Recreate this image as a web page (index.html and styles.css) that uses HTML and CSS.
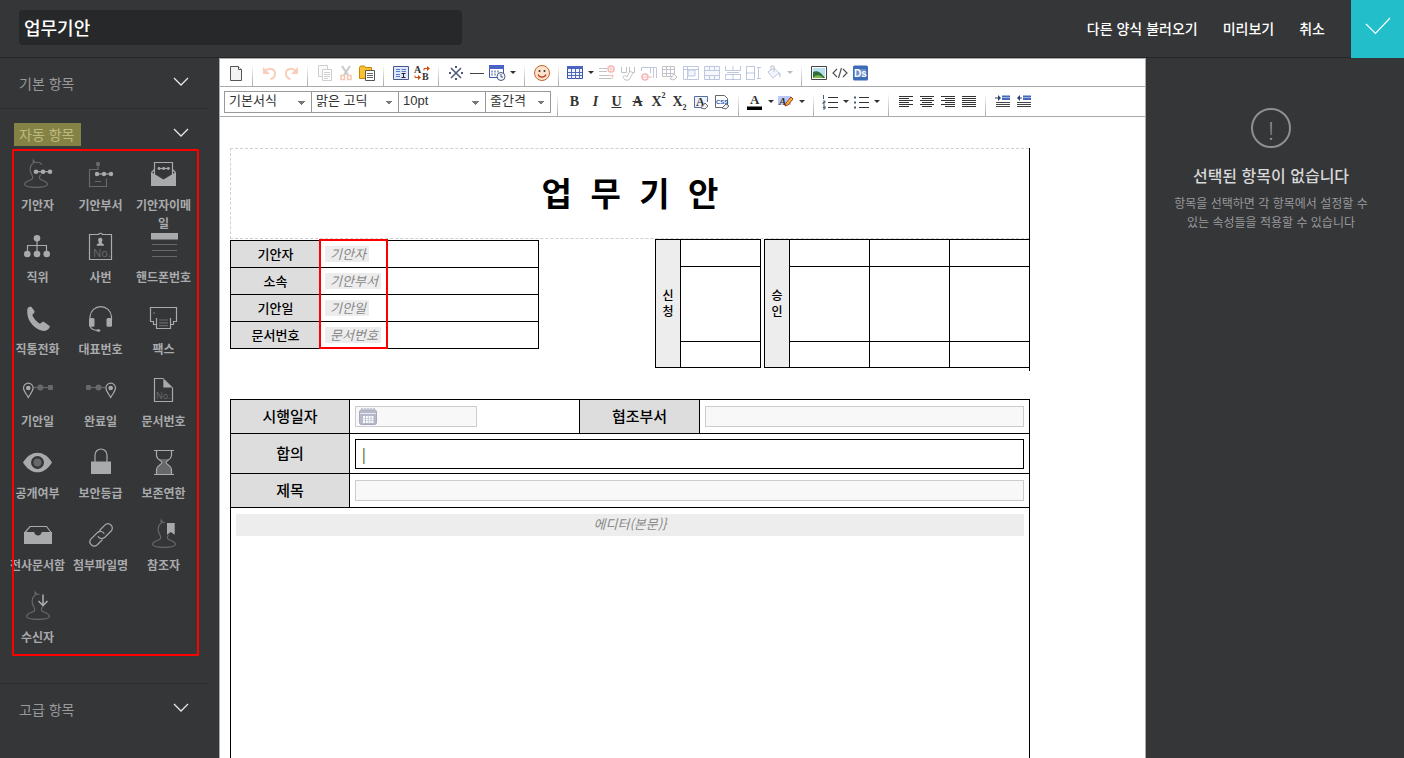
FILE: index.html
```html
<!DOCTYPE html>
<html lang="ko">
<head>
<meta charset="utf-8">
<meta name="viewport" content="width=device-width, initial-scale=1">
<title>업무기안</title>
<link rel="stylesheet" href="styles.css">
</head>
<body>
<svg class="defs" aria-hidden="true">
  <symbol id="person" viewBox="0 0 34 34"><path class="ln dim" d="M21 6.500C19 4.300 16.500 3.900 14 4.500L12.200 2.300V5.200C9.300 6.500 8.600 11 9.700 14.200C10.500 16.800 12.600 18.600 11.600 20.600C10 22.600 3.600 22.900 3.600 26.300C3.600 28.600 9 29.400 15 29.400S26.400 28.600 26.400 26.300C26.400 23 20.500 22.600 18.700 20.600C18 19.200 18.600 18 19.600 16.700"/></symbol>
  <symbol id="chev" viewBox="0 0 16 10"><path d="M1 1l7 7 7-7" fill="none" stroke="#e8e8e8" stroke-width="1.300"/></symbol>
  <symbol id="lines" viewBox="0 0 16 16"><path d="M6 3.500h10M6 8.500h10M6 13.500h10" stroke="#333" fill="none"/></symbol>
</svg>
<header class="top">
  <input class="top-title" type="text" value="업무기안" aria-label="양식 제목">
  <nav class="top-nav">
    <button type="button">다른 양식 불러오기</button>
    <button type="button">미리보기</button>
    <button type="button">취소</button>
  </nav>
  <button class="confirm" type="button" aria-label="확인"><svg width="26" height="18" viewBox="0 0 26 18"><path d="M1 7l9.500 9.500L25 1" fill="none" stroke="#fff" stroke-width="1.200"/></svg></button>
</header>
<div class="work">
  <aside class="side">
    <section class="sec"><button class="sec-head" type="button"><span>기본 항목</span><svg class="chev"><use href="#chev"/></svg></button></section>
    <section class="sec">
      <button class="sec-head" type="button"><mark>자동 항목</mark><svg class="chev"><use href="#chev"/></svg></button>
      <div class="items">
        <button type="button"><svg viewBox="0 0 34 34"><use href="#person" width="34" height="34"/><path class="ln" d="M15 13.700h14"/><g class="fl"><circle cx="15" cy="13.700" r="2.300"/><circle cx="22" cy="13.700" r="2.300"/><circle cx="29" cy="13.700" r="2.300"/></g></svg><span>기안자</span></button>
        <button type="button"><svg viewBox="0 0 34 34"><path class="ln dim" d="M14 6v6M14 11.500H5.500v17h17V20.500M11 23.500h6"/><circle class="fd" cx="14" cy="6" r="2.200"/><path class="ln" d="M13 16h14"/><g class="fl"><circle cx="13" cy="16" r="2.200"/><circle cx="20" cy="16" r="2.200"/><circle cx="27" cy="16" r="2.200"/></g></svg><span>기안부서</span></button>
        <button type="button"><svg viewBox="0 0 34 34"><path class="ln" d="M7.500 17V4.500h18V17M7.500 11.500l-3 3M25.500 11.500l3 3"/><path class="fl" d="M4 14l12.500 7.500L29 14v14H4z"/><path class="ln" d="M12 10.500h9.500"/><g class="fl"><circle cx="12" cy="10.500" r="1.400"/><circle cx="16.700" cy="10.500" r="1.400"/><circle cx="21.400" cy="10.500" r="1.400"/></g></svg><span>기안자이메일</span></button>
        <button type="button"><svg viewBox="0 0 34 34"><path class="ln" d="M16 8v16M6.500 24v-8.500h19V24"/><g class="fl"><circle cx="16" cy="8.300" r="3.300"/><circle cx="6.300" cy="24" r="3.300"/><circle cx="16" cy="24" r="3.300"/><circle cx="25.700" cy="24" r="3.300"/></g></svg><span>직위</span></button>
        <button type="button"><svg viewBox="0 0 34 34"><path class="ln" d="M14.500 4.500h-9v25h22v-25h-9c0-1.500-4-1.500-4 0z"/><path class="fl" d="M16.300 7.800c2 0 2.800 2.200 1.500 4.200v1.200l2 1v1.600h-7v-1.600l2-1V12c-1.300-2-.5-4.200 1.500-4.200z"/><text class="no" x="9" y="26.500" font-size="11">No.</text></svg><span>사번</span></button>
        <button type="button"><svg viewBox="0 0 34 34"><path class="fl" d="M4 3h27v6.500H4z"/><path class="ln dim" d="M5 14.500h25M5 20.500h25M5 26.500h25"/></svg><span>핸드폰번호</span></button>
        <button type="button"><svg viewBox="0 0 34 34"><path class="fl" d="M6.500 6.500C7.500 4.500 9.500 4.400 10.500 5l2.800 3.800c.7 1.400 0 2.200-1 3-1 .8-1 1.500-.5 2.500 1.600 3 3.700 5.200 6.200 6.900 1 .6 1.700.4 2.400-.4.900-1 1.900-1.300 3-.6l4.600 3.300c.9.700 1 1.600.3 2.600-1.500 2.200-4 3.300-6.900 2.700C13 26.900 4.500 17.500 6.500 6.500z"/></svg><span>직통전화</span></button>
        <button type="button"><svg viewBox="0 0 34 34"><path class="ln" d="M6 18v-3.500a10.800 11 0 0 1 21.500 0V18M6 23.500c.5 3.500 3.500 4.800 8 5"/><rect class="fl" x="5" y="16" width="5.500" height="8.700" rx="1.500"/><rect class="fl" x="22.500" y="16" width="5.500" height="8.700" rx="1.500"/><ellipse class="fl" cx="14.300" cy="28.500" rx="2" ry="1.300"/></svg><span>대표번호</span></button>
        <button type="button"><svg viewBox="0 0 34 34"><path class="ln" d="M9.500 22.500h-3v-3h-3v-14h26v14h-3v3h-3"/><path class="ln" d="M9.500 16v10.500h14V16"/><path class="ln dim" d="M12 18h9M12 20.800h9M12 23.600h9"/><circle class="fd" cx="7" cy="11" r="1"/></svg><span>팩스</span></button>
        <button type="button"><svg viewBox="0 0 34 34"><path class="ln dim" d="M13 13.500h18"/><circle class="fd" cx="19.300" cy="13.500" r="3"/><rect class="fd" x="27" y="11" width="5" height="5" rx="1"/><path class="ln" d="M7.300 23.500C5 19.500 2.500 17 2.500 14a4.800 4.800 0 0 1 9.600 0c0 3-2.500 5.500-4.800 9.500z"/><circle class="fl" cx="7.300" cy="14" r="2.300"/></svg><span>기안일</span></button>
        <button type="button"><svg viewBox="0 0 34 34"><path class="ln dim" d="M3 13.500h18"/><circle class="fd" cx="14.500" cy="13.500" r="3"/><rect class="fd" x="2" y="11" width="5" height="5" rx="1"/><path class="ln" d="M26.700 23.500c-2.300-4-4.800-6.500-4.800-9.500a4.800 4.800 0 0 1 9.600 0c0 3-2.500 5.500-4.800 9.500z"/><circle class="fl" cx="26.700" cy="14" r="2.300"/></svg><span>완료일</span></button>
        <button type="button"><svg viewBox="0 0 34 34"><path class="ln" d="M16.500 4.500h-9v23h18v-14"/><path class="fl" d="M16.300 4.300l9.500 9.200h-9.500z"/><text class="no" x="9" y="25" font-size="9">No.</text></svg><span>문서번호</span></button>
        <button type="button"><svg viewBox="0 0 34 34"><path class="fl" d="M2 16.500C6 10 11 6.700 16.500 6.700S27 10 31 16.500C27 23 22 26.300 16.500 26.300S6 23 2 16.500z"/><circle class="bg" cx="16.500" cy="16.500" r="6.500"/><circle class="fd" cx="16.500" cy="16.500" r="4"/></svg><span>공개여부</span></button>
        <button type="button"><svg viewBox="0 0 34 34"><path class="ln" d="M11 16V9a6 6 0 0 1 12 0v7"/><path class="fl" d="M7 15.500h20V28H7z"/></svg><span>보안등급</span></button>
        <button type="button"><svg viewBox="0 0 34 34"><path class="fd" d="M12 13h10l-3.500 4 5.500 6v5H10v-5l5.500-6z"/><path class="ln" d="M7 4.500h20M7 28.500h20M9.500 5v4.500c0 4 5.500 5 5.500 7s-5.500 3-5.500 7.500v4M24.500 5v4.500c0 4-5.500 5-5.500 7s5.500 3 5.500 7.500v4"/></svg><span>보존연한</span></button>
        <button type="button"><svg viewBox="0 0 34 34"><path class="ln" d="M3.500 15L9 8.500h16.500L30.500 15"/><path class="fl" d="M3 14h10.200c.4 2 1.900 3.500 3.800 3.500s3.400-1.500 3.800-3.500H31v12H3z"/></svg><span>전사문서함</span></button>
        <button type="button"><svg viewBox="0 0 34 34"><path class="ln" d="M15.500 12.500l5.300-5.300c4-3.900 10.200 1.600 6.300 5.800l-6.200 6.200c-2.300 2.200-5.900 1.400-7-.9M18.500 21.500l-5.200 5.200c-4 3.700-10-1.600-6.200-5.800l6.200-6.200c2.300-2.200 6-1.400 7 1.100"/></svg><span>첨부파일명</span></button>
        <button type="button"><svg viewBox="0 0 34 34"><use href="#person" x="2" width="34" height="34"/><path class="bg" d="M18 3h12v14H18z"/><path class="fl" d="M20 5h7.700v11.700L23.800 14 20 16.700z"/></svg><span>참조자</span></button>
        <button type="button"><svg viewBox="0 0 34 34"><use href="#person" x="2" width="34" height="34"/><path class="bg" d="M18.500 3h8v12h-8z"/><path class="ln bold" d="M22 4.500v11M17.500 11l4.500 4.500 4.500-4.500"/></svg><span>수신자</span></button>
        <i class="mark-box items-box"></i>
      </div>
    </section>
    <section class="sec"><button class="sec-head" type="button"><span>고급 항목</span><svg class="chev"><use href="#chev"/></svg></button></section>
  </aside>
  <main class="editor">
    <div class="bar bar-main">
      <div class="grp">
        <button type="button" aria-label="새 문서"><svg viewBox="0 0 16 16"><path d="M2.500 1.500h8l3 3v11h-11z" fill="#f3f3f3" stroke="#555"/><path d="M10.500 1.500v3h3" fill="#fff" stroke="#555"/></svg></button>
      </div>
      <div class="grp">
        <button type="button" aria-label="실행 취소"><svg class="off" viewBox="0 0 16 16"><path d="M3 6.500C6 2.500 13 3 13 8.500c0 3-2 5-4.500 5.500" fill="none" stroke="#f0763a" stroke-width="2"/><path d="M1 2v7h7z" fill="#f0763a"/></svg></button>
        <button type="button" aria-label="다시 실행"><svg class="off" viewBox="0 0 16 16"><path d="M13 6.500C10 2.500 3 3 3 8.500c0 3 2 5 4.500 5.500" fill="none" stroke="#f0763a" stroke-width="2"/><path d="M15 2v7H8z" fill="#f0763a"/></svg></button>
      </div>
      <div class="grp">
        <button type="button" aria-label="복사"><svg class="off" viewBox="0 0 16 16"><path d="M1.500.5h9v11h-9z" fill="#eee" stroke="#777"/><path d="M5.500 4.500h9v11h-9z" fill="#fff" stroke="#777"/><path d="M7 7.500h6M7 9.500h6M7 11.500h6M7 13.500h4" stroke="#777"/></svg></button>
        <button type="button" aria-label="잘라내기"><svg class="off" viewBox="0 0 16 16"><path d="M4 1l6 9M12 1L6 10" stroke="#666" stroke-width="2" fill="none"/><path d="M3 10.500h3.500v4H3zM9.500 10.500H13v4H9.500z" fill="none" stroke="#e2622c" stroke-width="1.500"/></svg></button>
        <button type="button" aria-label="붙여넣기"><svg viewBox="0 0 16 16"><path d="M.5 2.500l1-1.500h4l1 1.500h6v11H.5z" fill="#fbc02d" stroke="#c98500"/><path d="M6.500 5.500h9v10h-9z" fill="#fff" stroke="#555"/><path d="M8 8.500h6M8 10.500h6M8 12.500h6" stroke="#666"/></svg></button>
      </div>
      <div class="grp">
        <button type="button" aria-label="서식"><svg viewBox="0 0 16 16"><path d="M.5 1.500h15v13H.5z" fill="#dfe8fb" stroke="#46598c"/><path d="M3 4.500h4M3 6.500h4M8.500 4.500H13M8.500 6.500H13M3 9.500h4M3 11.500h4" stroke="#5878cc"/><path d="M8.500 8.500h4M10.500 8.500v4.500M8.500 12.500h4" stroke="#222"/></svg></button>
        <button type="button" aria-label="찾기 바꾸기"><svg viewBox="0 0 16 16"><text x="0" y="8" class="ser" font-size="10">A</text><text x="8" y="15" class="ser" font-size="10">B</text><path d="M10 5.500V3.500h4M1 10.500v2h4" fill="none" stroke="#d9480f"/><path d="M13 1l3 2.500L13 6zM4 10l3 2.500L4 15z" fill="#d9480f"/></svg></button>
      </div>
      <div class="grp">
        <button type="button" aria-label="특수문자"><svg viewBox="0 0 16 16"><path d="M3 3l10 10M13 3L3 13" stroke="#4b5878" stroke-width="1.500"/><g fill="#4b5878"><path d="M7 1h2v2H7zM7 13h2v2H7zM1 7h2v2H1zM13 7h2v2h-2z"/></g></svg></button>
        <button type="button" aria-label="가로선"><svg viewBox="0 0 16 16"><path d="M1 8.500h14" stroke="#444"/></svg></button>
        <button type="button" class="drop" aria-label="날짜"><svg viewBox="0 0 16 16"><path d="M.5.500h14v12H.5z" fill="#fff" stroke="#3b55b0"/><path d="M0 0h15v4H0z" fill="#4a63c4"/><path d="M2 6.500h9M2 9.500h6" stroke="#98a4cc" stroke-width="2" stroke-dasharray="2 1"/><circle cx="12" cy="11.500" r="4" fill="#f3f6ff" stroke="#4b5878"/><path d="M12 9v3h2" fill="none" stroke="#4b5878"/></svg></button>
      </div>
      <div class="grp">
        <button type="button" aria-label="이모티콘"><svg viewBox="0 0 16 16"><circle cx="8" cy="8" r="7.500" fill="#fde3cb" stroke="#c4632d"/><circle cx="5.500" cy="6" r="1" fill="#333"/><circle cx="10.500" cy="6" r="1" fill="#333"/><path d="M4 9.500c1.500 3.500 6.500 3.500 8 0" fill="none" stroke="#c02f1d" stroke-width="1.200"/></svg></button>
      </div>
      <div class="grp">
        <button type="button" class="drop" aria-label="표"><svg viewBox="0 0 16 16"><path d="M.5 1.500h15v12H.5z" fill="#f2f5ff" stroke="#3b55a8"/><path d="M0 1h16v3H0z" fill="#4a63c4"/><path d="M4.500 2v12M8.500 2v12M12.500 2v12M1 7.500h14M1 10.500h14" stroke="#5068b8"/></svg></button>
        <button type="button" aria-label="행 추가"><svg class="off" viewBox="0 0 16 16"><path d="M0 3.500h8M0 6.500h8M0 10.500h10M0 13.500h12" stroke="#555"/><circle cx="12" cy="4" r="3" fill="none" stroke="#e0302c" stroke-width="1.500"/><path d="M12 2.500v3M10.500 4h3M10 11l4-1-1 4" stroke="#e0302c" fill="none"/></svg></button>
        <button type="button" aria-label="열 추가"><svg class="off" viewBox="0 0 16 16"><path d="M1.500 2v5.500h5V2M9.500 2v5.500h5V2" fill="none" stroke="#555"/><path d="M5 15c-4-4 0-6 2-3l3-6 3 2-4 7z" fill="#fff" stroke="#555"/></svg></button>
        <button type="button" aria-label="행 삭제"><svg class="off" viewBox="0 0 16 16"><path d="M.5 6V2.500h9V8M9.500 2.500h6V13M12.500 3v10" fill="none" stroke="#4b60aa"/><circle cx="4" cy="12" r="3" fill="none" stroke="#e0302c" stroke-width="1.500"/><path d="M2 12h4M8 12h3" stroke="#e0302c"/></svg></button>
        <button type="button" aria-label="표 삭제"><svg class="off" viewBox="0 0 16 16"><path d="M.5 1.500h12v10H.5zM4.500 2v9M8.500 2v9M1 4.500h11M1 8.500h11" fill="none" stroke="#556"/><path d="M8 14l4-5 3 3-3 3z" fill="#eee" stroke="#556"/></svg></button>
        <button type="button" aria-label="표 속성"><svg class="off" viewBox="0 0 16 16"><path d="M.5 1.500h15v13H.5zM.5 4.500h15M4.500 1.500v13" fill="none" stroke="#4b60aa"/><path d="M5 5h7v6H5z" fill="#dfe5fa" stroke="#4b60aa"/></svg></button>
        <button type="button" aria-label="셀 병합"><svg class="off" viewBox="0 0 16 16"><path d="M.5 1.500h15v13H.5zM5.500 1.500v4M10.500 1.500v4M.5 5.500h15v5H.5M5.500 10.500v4M10.500 10.500v4" fill="#e8ecfb" stroke="#4b60aa"/></svg></button>
        <button type="button" aria-label="행 분할"><svg class="off" viewBox="0 0 16 16"><path d="M.5 1v4.500h15V1M8 1v4M.5 9.500h15v5H.5zM8 9.500v5M2 7.500h12" fill="none" stroke="#4b60aa"/></svg></button>
        <button type="button" aria-label="열 분할"><svg class="off" viewBox="0 0 16 16"><path d="M.5 1.500h8v13h-8zM.5 8h8M12.500 3v10M11 2.500h4M11 13.500h4" fill="none" stroke="#4b60aa"/></svg></button>
        <button type="button" class="drop drop-off" aria-label="셀 배경색"><svg class="off" viewBox="0 0 16 16"><path d="M2 7l6-4 5 5-6 5z" fill="#dbe3fa" stroke="#4b60aa"/><path d="M8 7V1H5v4" fill="none" stroke="#556"/><path d="M12 7c3 0 3 4 2 6-1-2-1-4-2-6z" fill="#4b60aa"/></svg></button>
      </div>
      <div class="grp">
        <button type="button" aria-label="이미지"><svg viewBox="0 0 16 16"><path d="M.5 1.500h15v13H.5z" fill="#fff" stroke="#444"/><path d="M2 3h12v10H2z" fill="#b6e0ee"/><path d="M2 7c5-2 8 1 12 6H2z" fill="#2f6f3a"/><path d="M2 13c3-4 8-3 10 0z" fill="#86b84a"/></svg></button>
        <button type="button" aria-label="소스"><svg viewBox="0 0 16 16"><path d="M5 4L1 8l4 4M11 4l4 4-4 4M9.500 3l-3 10" fill="none" stroke="#555" stroke-width="1.200"/></svg></button>
        <button type="button" aria-label="Ds"><svg viewBox="0 0 16 16"><rect y="0.500" width="15" height="15" rx="1.500" fill="#3f6cb8"/><path d="M2 4h11v8H2z" fill="#fff" opacity=".25"/><text x="1" y="12" font-family="Liberation Sans, sans-serif" font-size="10" font-weight="bold" fill="#fff">Ds</text></svg></button>
      </div>
    </div>
    <div class="bar bar-format">
      <div class="selects">
        <select aria-label="서식"><option>기본서식</option></select>
        <select aria-label="글꼴"><option>맑은 고딕</option></select>
        <select aria-label="글자 크기"><option>10pt</option></select>
        <select class="narrow" aria-label="줄간격"><option>줄간격</option></select>
      </div>
      <div class="grp">
        <button type="button" class="t"><b>B</b></button>
        <button type="button" class="t"><em>I</em></button>
        <button type="button" class="t"><u>U</u></button>
        <button type="button" class="t"><s>A</s></button>
        <button type="button" class="t">X<sup>2</sup></button>
        <button type="button" class="t">X<sub>2</sub></button>
        <button type="button" aria-label="서식 지우기"><svg viewBox="0 0 16 16"><path d="M14.500 8V2.500H1.500v11H8" fill="#eef2fd" stroke="#5a6ca0"/><text x="3" y="12" class="ser" font-size="12">A</text><path d="M8 14l4-5 3 3-3 3z" fill="#f4f4f4" stroke="#667"/></svg></button>
        <button type="button" aria-label="CSS 지우기"><svg viewBox="0 0 16 16"><path d="M1.500 1.500h9l3 3v9h-12z" fill="#fff" stroke="#666"/><text x="2" y="10" font-family="Liberation Sans, sans-serif" font-size="6" font-weight="bold" fill="#2556b8">CSS</text><path d="M8 14l4-4 3 2-3 3z" fill="#f4f4f4" stroke="#667"/></svg></button>
      </div>
      <div class="grp">
        <button type="button" class="drop" aria-label="글자색"><svg viewBox="0 0 16 16"><text x="3" y="10" class="ser" font-size="13">A</text><path d="M0 12.500h15v3.500H0z"/></svg></button>
        <button type="button" class="drop" aria-label="배경색"><svg viewBox="0 0 16 16"><path d="M0 2h13v9H0z" fill="#b9c8f7"/><text x="1" y="11" class="ser" font-size="11" font-style="italic">A</text><path d="M7 12l1-3 5-6 2 2-5 6z" fill="#f9b234" stroke="#a33c14"/></svg></button>
      </div>
      <div class="grp">
        <button type="button" class="drop" aria-label="번호 목록"><svg viewBox="0 0 16 16"><use href="#lines" width="16" height="16"/><path d="M1.500 1v4M1 7h2v1.500H1V10h2M1 12h2v3H1M1 13.500h2" fill="none" stroke="#4b5878"/></svg></button>
        <button type="button" class="drop" aria-label="글머리 목록"><svg viewBox="0 0 16 16"><use href="#lines" width="16" height="16"/><path d="M1 2.500h2v2H1zM1 7.500h2v2H1zM1 12.500h2v2H1z" fill="#4b5878"/></svg></button>
      </div>
      <div class="grp">
        <button type="button" aria-label="왼쪽 정렬"><svg viewBox="0 0 16 16"><path d="M1 2.500h14M1 4.500h10M1 6.500h14M1 8.500h10M1 10.500h14M1 12.500h10" stroke="#333"/></svg></button>
        <button type="button" aria-label="가운데 정렬"><svg viewBox="0 0 16 16"><path d="M1 2.500h14M3 4.500h10M1 6.500h14M3 8.500h10M1 10.500h14M3 12.500h10" stroke="#333"/></svg></button>
        <button type="button" aria-label="오른쪽 정렬"><svg viewBox="0 0 16 16"><path d="M1 2.500h14M5 4.500h10M1 6.500h14M5 8.500h10M1 10.500h14M5 12.500h10" stroke="#333"/></svg></button>
        <button type="button" aria-label="양쪽 정렬"><svg viewBox="0 0 16 16"><path d="M1 2.500h14M1 4.500h14M1 6.500h14M1 8.500h14M1 10.500h14M1 12.500h14" stroke="#333"/></svg></button>
      </div>
      <div class="grp">
        <button type="button" aria-label="들여쓰기"><svg viewBox="0 0 16 16"><path d="M7 2.500h8M7 5h8" stroke="#4468bb" stroke-width="2"/><path d="M1 8.500h14M1 10.500h14M1 12.500h14" stroke="#444"/><path d="M0 4h4" stroke="#2d3f6e"/><path d="M3 1l3 3-3 3z" fill="#2d3f6e"/></svg></button>
        <button type="button" aria-label="내어쓰기"><svg viewBox="0 0 16 16"><path d="M7 2.500h8M7 5h8" stroke="#4468bb" stroke-width="2"/><path d="M1 8.500h14M1 10.500h14M1 12.500h14" stroke="#444"/><path d="M2 4h4" stroke="#2d3f6e"/><path d="M4 1L1 4l3 3z" fill="#2d3f6e"/></svg></button>
      </div>
    </div>
    <div class="canvas">
      <article class="paper">
        <div class="head">
          <h1>업&nbsp; 무&nbsp; 기&nbsp; 안</h1>
          <div class="meta">
            <div class="info-wrap">
              <table class="grid info">
                <tr><th scope="row">기안자</th><td><span class="chip">기안자</span></td></tr>
                <tr><th scope="row">소속</th><td><span class="chip">기안부서</span></td></tr>
                <tr><th scope="row">기안일</th><td><span class="chip">기안일</span></td></tr>
                <tr><th scope="row">문서번호</th><td><span class="chip">문서번호</span></td></tr>
              </table>
              <i class="mark-box info-box"></i>
            </div>
            <div class="signs">
              <table class="grid sign"><tr><th rowspan="3">신<br>청</th><td></td></tr><tr class="stamp"><td></td></tr><tr class="last"><td></td></tr></table>
              <table class="grid sign"><tr><th rowspan="3">승<br>인</th><td></td><td></td><td></td></tr><tr class="stamp"><td></td><td></td><td></td></tr><tr class="last"><td></td><td></td><td></td></tr></table>
            </div>
          </div>
        </div>
        <table class="grid form">
          <colgroup><col class="c-first"><col class="c-date"><col class="c-label"><col></colgroup>
          <tr><th scope="row"><label for="f-date">시행일자</label></th><td><div class="field date"><svg width="18" height="17" viewBox="0 0 18 17"><rect x=".5" y="2" width="17" height="14.500" rx="2" fill="#b5b9c9" stroke="#a3a8ba"/><path d="M1 5.500h16" stroke="#e6e8f0"/><path d="M3 0v3M6 0v3M9 0v3M12 0v3M15 0v3" stroke="#b5b9c9" stroke-width="1.500"/><path d="M4 9h10.500M4 11.500h10.500M4 14h10.500" stroke="#fff" stroke-width="2" stroke-dasharray="2 .8"/></svg><input id="f-date" type="text"></div></td><th scope="row"><label for="f-dept">협조부서</label></th><td><input id="f-dept" class="field" type="text"></td></tr>
          <tr class="tall"><th scope="row"><label for="f-agree">합의</label></th><td colspan="3"><input id="f-agree" class="agree" type="text"></td></tr>
          <tr><th scope="row"><label for="f-title">제목</label></th><td colspan="3"><input id="f-title" class="field" type="text"></td></tr>
          <tr class="body"><td colspan="4"><div class="body-chip">에디터(본문)}</div></td></tr>
        </table>
      </article>
    </div>
  </main>
  <aside class="props">
    <div class="bang">!</div>
    <h2>선택된 항목이 없습니다</h2>
    <p>항목을 선택하면 각 항목에서 설정할 수<br>있는 속성들을 적용할 수 있습니다</p>
  </aside>
</div>
</body>
</html>
```
FILE: styles.css
```css
* { box-sizing: border-box; }
body {
  margin: 0;
  height: 100vh;
  display: flex;
  flex-direction: column;
  overflow: hidden;
  background: #353638;
  font-family: "Noto Sans CJK KR", sans-serif;
  font-size: 13px;
}
button, input, select { font: inherit; color: inherit; margin: 0; padding: 0; }
button { background: none; border: 0; }
.defs { position: absolute; width: 0; height: 0; }

/* Header */
.top {
  flex: none;
  display: flex;
  align-items: stretch;
  height: 58px;
  padding-left: 19px;
  color: #fff;
  border-bottom: 1px solid #252627;
}
.top-title {
  width: 443px;
  height: 35px;
  margin-top: 10px;
  padding: 0 5px 2px;
  border: 0;
  border-radius: 4px;
  background: #272829;
  font-size: 18px;
  font-weight: 500;
}
.top-nav {
  margin-left: auto;
  padding: 0 26px 2px 0;
  display: flex;
  align-items: center;
  gap: 25px;
  font-size: 14px;
  font-weight: 500;
}
.confirm {
  width: 53px;
  margin-bottom: -1px;
  padding-bottom: 6px;
  background: #22bec9;
  display: flex;
  align-items: center;
  justify-content: center;
}
.work { flex: 1; display: flex; min-height: 0; }

/* Left sidebar */
.side { flex: none; width: 219px; padding-right: 10px; overflow: hidden; }
.sec { border-bottom: 1px solid #2b2c2e; }
.sec:last-child { border: 0; }
.sec-head {
  width: 100%;
  height: 50px;
  padding: 0 20px 0 19px;
  display: flex;
  align-items: center;
  justify-content: space-between;
  font-size: 14px;
  line-height: 23px;
  color: #98999b;
}
.sec-head mark {
  margin-left: -5px;
  padding: 0 7px 0 5px;
  background: #858245;
  color: #bdbb80;
}
.chev { width: 16px; height: 10px; margin-bottom: 3px; }
.items {
  position: relative;
  display: grid;
  grid-template-columns: repeat(3, 63px);
  grid-auto-rows: 72px;
  margin-top: -1px;
  padding: 0 0 21px 6px;
}
.items button {
  display: flex;
  flex-direction: column;
  align-items: center;
  justify-content: flex-start;
  gap: 4px;
  font-size: 12px;
  font-weight: 700;
  line-height: 18px;
  color: #a9aaac;
}
.items svg { flex: none; width: 34px; height: 34px; overflow: visible; }
.ln { fill: none; stroke: #a9aaac; stroke-width: 1.200; }
.ln.dim { stroke: #67686a; }
.ln.bold { stroke-width: 1.600; }
.fl { fill: #a9aaac; }
.fd { fill: #67686a; }
.bg { fill: #353638; }
.no { font-family: "Noto Sans", sans-serif; font-weight: 400; fill: #67686a; }
.mark-box { position: absolute; border: 2px solid #f00; pointer-events: none; }
.items-box { top: -9px; left: 12px; width: 187px; height: 507px; border-radius: 1px; }

/* Editor */
.editor {
  flex: 1;
  min-width: 0;
  display: flex;
  flex-direction: column;
  background: #fff;
  border: 1px solid #aaa;
  border-bottom: 0;
}
.bar { flex: none; display: flex; border-bottom: 1px solid #aaa; }
.bar-main { height: 28px; }
.bar-format { height: 30px; padding-left: 4px; }
.grp { display: flex; align-items: center; padding: 0 6px 0 7px; position: relative; }
.bar-main .grp:first-child { padding-left: 5px; }
.grp::before {
  content: "";
  position: absolute;
  left: 0;
  top: 6px;
  bottom: 0;
  width: 1px;
  background: linear-gradient(#fff, #aaa);
}
.bar-main .grp:first-child::before { display: none; }
.grp button { width: 21px; height: 22px; display: flex; align-items: center; justify-content: center; }
.grp svg { width: 16px; height: 16px; overflow: visible; }
.grp .drop { width: 31px; justify-content: flex-start; padding-left: 2px; }
.drop::after {
  content: "";
  margin-left: 5px;
  border: 3px solid transparent;
  border-top-color: #333;
  border-bottom: 0;
}
.drop-off::after { border-top-color: #bbb; }
.off { opacity: .35; }
.ser { font-family: "Liberation Serif", serif; font-weight: bold; fill: #333; }
.grp .t { font: bold 14px/22px "Liberation Serif", serif; color: #333; }
.t sup, .t sub { font-size: 8px; line-height: 10px; }
.t sup { align-self: flex-start; }
.t sub { align-self: flex-end; }
.selects { display: flex; align-items: flex-start; padding: 4px 6px 0 0; }
.selects select {
  appearance: none;
  width: 88px;
  height: 22px;
  margin-right: -1px;
  padding: 0 16px 4px 4px;
  border: 1px solid #999;
  border-radius: 0;
  background-color: #fff;
  background-image: linear-gradient(to bottom left, #777 50%, transparent 50%), linear-gradient(to bottom right, #777 50%, transparent 50%);
  background-position: right 9px top 9px, right 5px top 9px;
  background-size: 4px 4px;
  background-repeat: no-repeat;
  font-family: "Liberation Sans", "Noto Sans CJK KR", sans-serif;
  color: #333;
}
.selects .narrow { width: 66px; margin-right: 0; }

/* Document */
.canvas { flex: 1; min-height: 0; overflow: hidden; padding: 31px 10px 0; }
.paper { max-width: 800px; color: #000; }
.head { border-right: 1px solid #000; padding-bottom: 3px; }
h1 {
  margin: 0;
  height: 91px;
  border: 1px dashed #d0d0d0;
  border-right: 0;
  text-align: center;
  font-size: 33px;
  line-height: 86px;
  font-weight: 700;
}
.meta { display: flex; justify-content: space-between; align-items: flex-start; }
.grid { border-collapse: collapse; table-layout: fixed; }
.grid th, .grid td { border: 1px solid #000; padding: 0 5px; }
.grid th { background: #ddd; padding: 0 0 2px; font-weight: 500; }
.info-wrap { position: relative; margin-top: 1px; }
.info { width: 309px; }
.info tr { height: 27px; }
.info th { width: 90px; }
.grid.info td { padding: 0 4px; }
.chip {
  display: block;
  width: max-content;
  padding: 0 3px 0 5px;
  line-height: 16px;
  background: #ededed;
  color: #888;
  font-style: italic;
}
.info-box { left: 89px; top: -1px; width: 69px; height: 110px; }
.signs { display: flex; gap: 3px; margin-right: -1px; }
.sign { table-layout: auto; }
.sign th { width: 25px; background: #ededed; font-size: 12px; line-height: 16px; }
.sign td { width: 80px; }
.sign tr { height: 27px; }
.sign .stamp { height: 75px; }
.sign .last { height: 26px; }
.form { width: 100%; margin-top: 28px; }
.form .c-first { width: 119px; }
.form .c-label { width: 120px; }
.form .c-date { width: 230px; }
.form tr { height: 34px; }
.form .tall { height: 40px; }
.form .body { height: 480px; }
.form th { font-size: 15px; }
.form .body td { vertical-align: top; padding-top: 6px; }
.field {
  display: block;
  width: 100%;
  height: 21px;
  border: 1px solid #ccc;
  background: #f8f8f8;
  border-radius: 0;
}
.date { display: flex; align-items: center; width: 122px; padding: 0 3px; }
.date svg { flex: none; }
.date input { flex: 1; min-width: 0; height: 17px; border: 0; background: none; }
.agree {
  display: block;
  width: 100%;
  height: 30px;
  padding: 0 7px;
  border: 1px solid #000;
  border-radius: 0;
  background: #fff linear-gradient(90deg, #c98a1e 50%, #7cc4f5 50%) no-repeat 7px 8px / 2px 16px;
}
.body-chip {
  padding-bottom: 2px;
  line-height: 20px;
  background: #ededed;
  color: #888;
  text-align: center;
  font-style: italic;
}

/* Right panel */
.props {
  flex: none;
  width: 258px;
  padding: 50px 8px 0 0;
  text-align: center;
  color: #98999b;
}
.bang {
  width: 40px;
  height: 40px;
  margin: 0 auto;
  border: 2px solid #8e8f90;
  border-radius: 50%;
  font: 300 25px/40px "Open Sans", sans-serif;
}
h2 { margin: 15px 0 6px; font-size: 16px; line-height: 24px; font-weight: 500; color: #d8d8d9; }
.props p { margin: 0; font-size: 12px; line-height: 19px; }
```
